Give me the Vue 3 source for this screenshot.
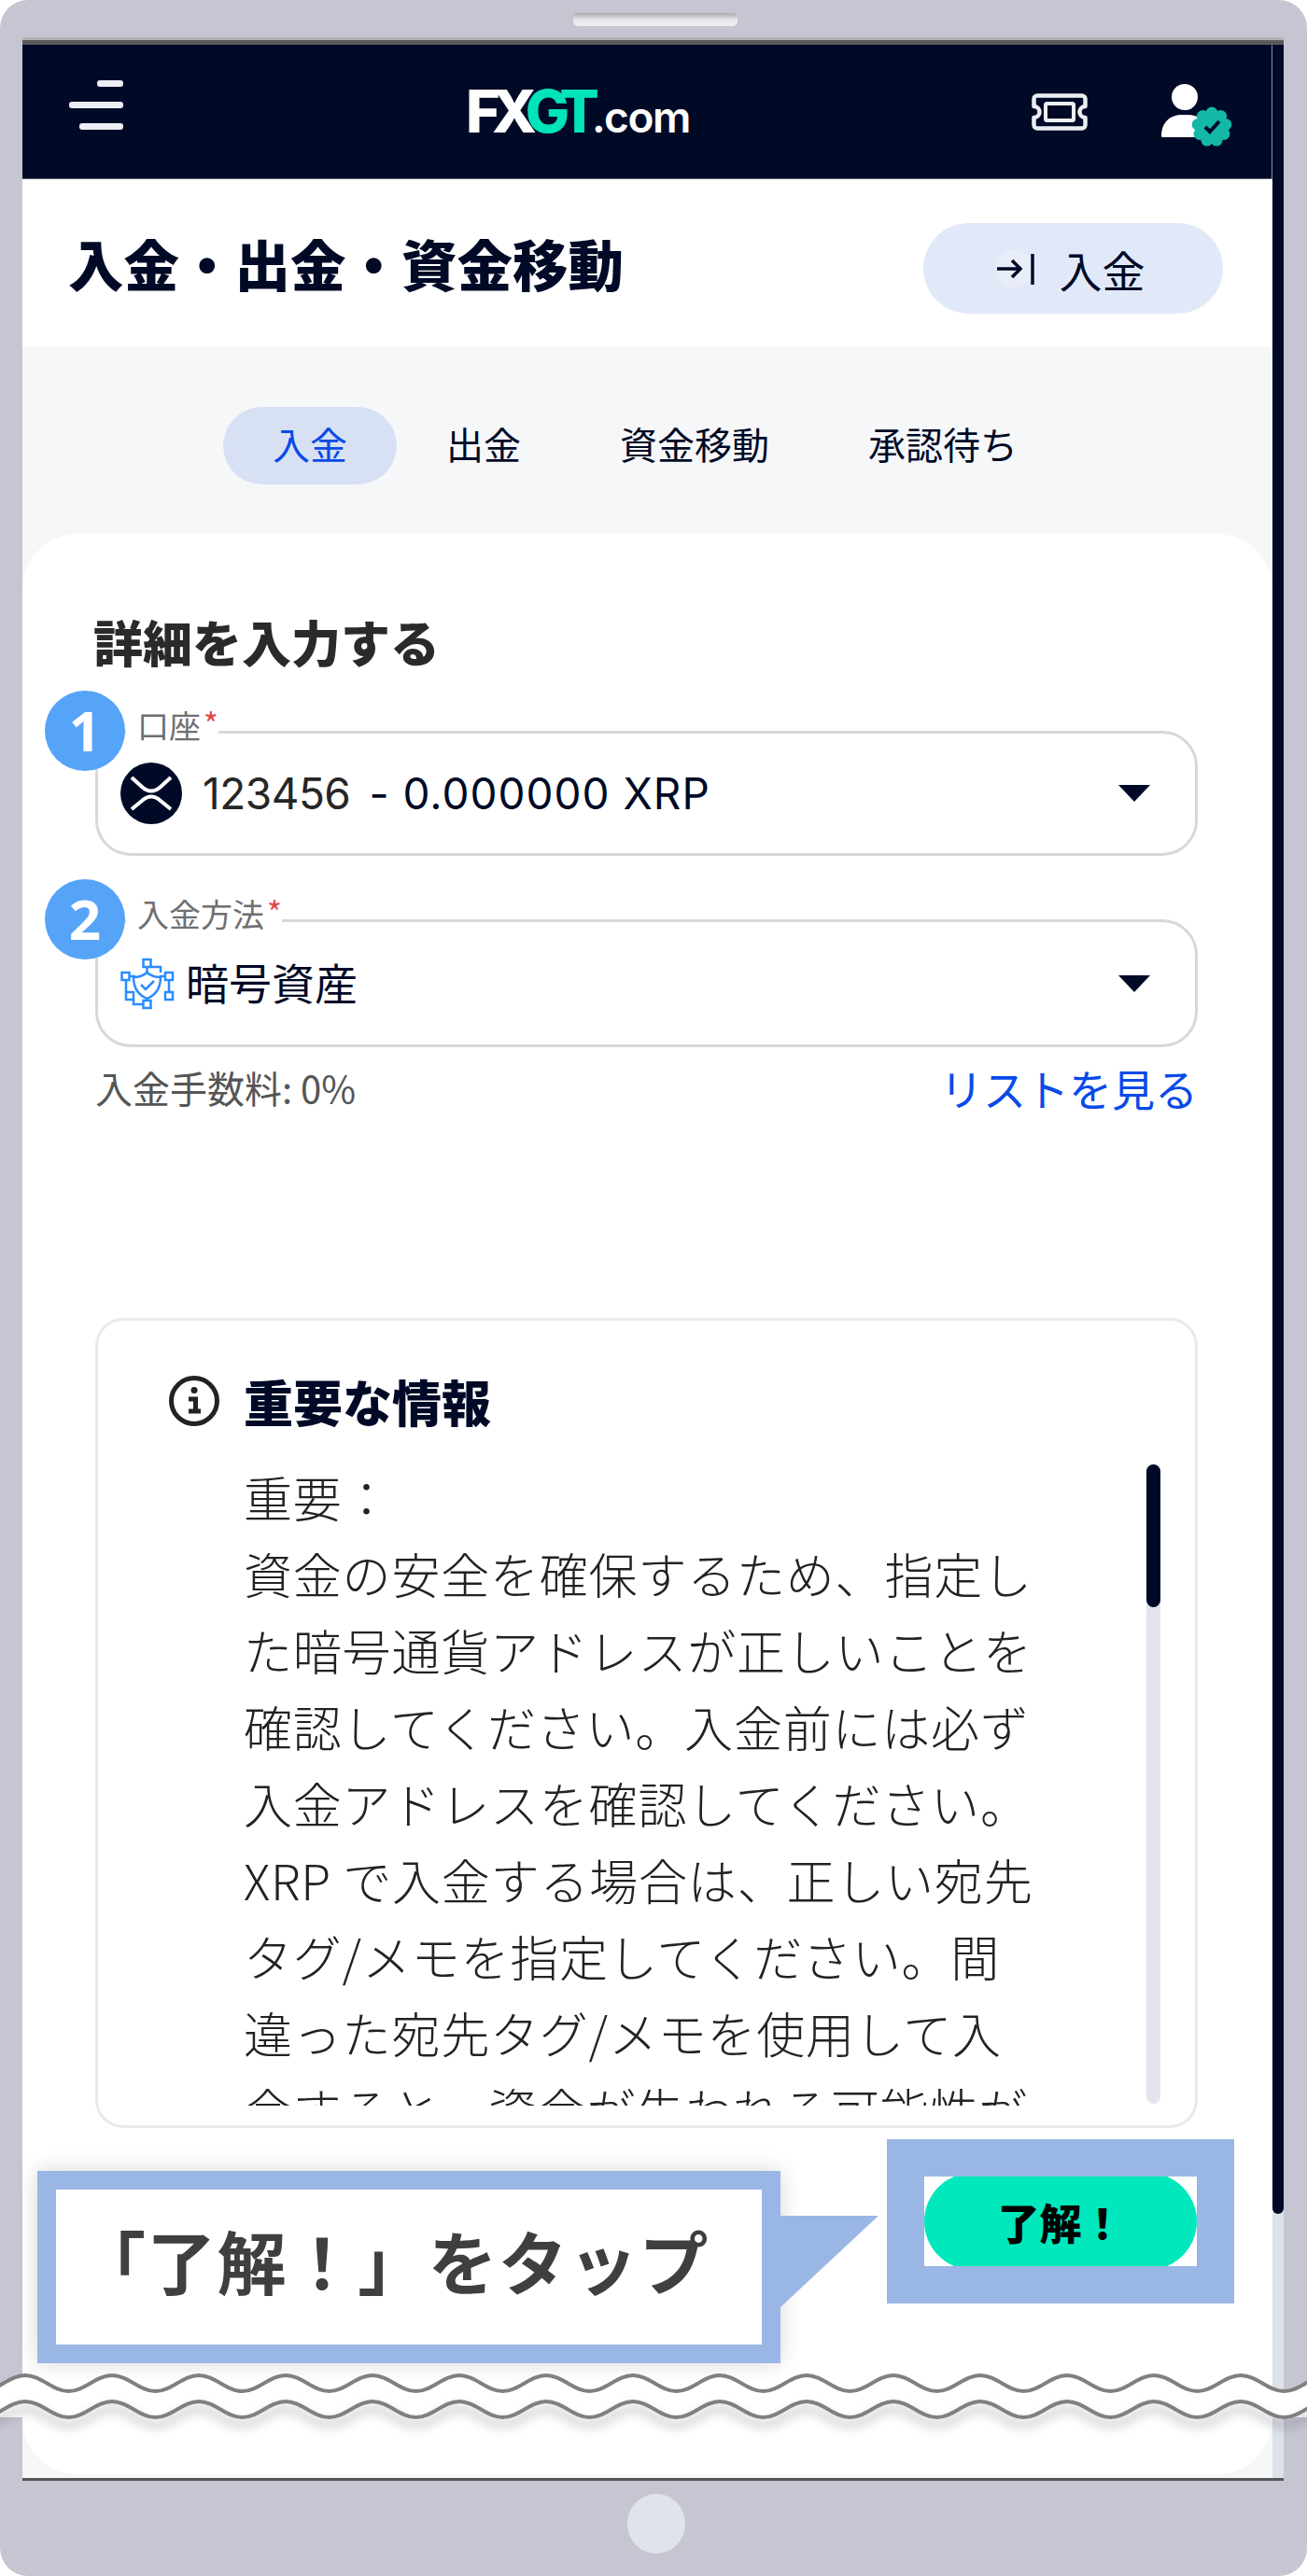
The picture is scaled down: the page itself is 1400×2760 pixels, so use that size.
<script setup>
import { computed } from 'vue'

const tabs = ['入金', '出金', '資金移動', '承認待ち']

const noticeLines = [
  '重要：',
  '資金の安全を確保するため、指定し',
  'た暗号通貨アドレスが正しいことを',
  '確認してください。入金前には必ず',
  '入金アドレスを確認してください。',
  'XRP で入金する場合は、正しい宛先',
  'タグ/メモを指定してください。間',
  '違った宛先タグ/メモを使用して入',
  '金すると、資金が失われる可能性が',
]

// バッジのギザギザ
const scallops = Array.from({ length: 9 }, (_, i) => {
  const a = (i / 9) * Math.PI * 2
  return { cx: 55 + Math.sin(a) * 15, cy: 47 - Math.cos(a) * 15 }
})

// ページ省略の波線
function wave(y0, y1) {
  let d = `M-66 ${y0}`
  for (let x = -66; x < 1400; x += 93) {
    d += ` C${x + 17} ${y0} ${x + 29.5} ${y1} ${x + 46.5} ${y1} C${x + 63.5} ${y1} ${x + 76} ${y0} ${x + 93} ${y0}`
  }
  return d
}

const waveTop = computed(() => wave(15, 32))
const waveBottom = computed(() => wave(43, 60))
const waveFill = computed(() => `${waveTop.value} L1400 60 L-66 60 Z`)
</script>

<template>
  <div class="phone">
    <div class="speaker"></div>

    <div class="screen">
      <div class="main">
        <header class="nav">
          <div class="menu"><i></i><i></i><i></i></div>
          <div class="logo"><span class="fx">FX</span><span class="gt">GT</span><span class="com">.com</span></div>
          <svg class="ticket" viewBox="0 0 60 40" fill="none" stroke="#eceef5" stroke-width="4.500">
            <path d="M6 2.500H54a3.500 3.500 0 0 1 3.500 3.500V14a6 6 0 0 0 0 12V34a3.500 3.500 0 0 1-3.500 3.500H6a3.500 3.500 0 0 1-3.500-3.500V26a6 6 0 0 0 0-12V6a3.500 3.500 0 0 1 3.500-3.500Z" stroke-linejoin="round" />
            <rect x="15" y="11" width="30" height="18" rx="1.500" stroke-width="4" />
          </svg>
          <svg class="user" viewBox="0 0 78 68">
            <circle cx="26" cy="15" r="14" fill="#fff" />
            <path d="M1 57C1 42 10 34 24 34H30C38 34 44 38 48 44V58H3C1.500 58 1 57.500 1 57Z" fill="#fff" />
            <g fill="#14b8a6">
              <circle cx="55" cy="47" r="17" />
              <circle v-for="(s, i) in scallops" :key="i" :cx="s.cx" :cy="s.cy" r="6.500" />
            </g>
            <path d="M48 47L53 52L63 41" fill="none" stroke="#000a26" stroke-width="4" />
          </svg>
        </header>

        <section class="title-bar">
          <h1>入金・出金・資金移動</h1>
          <button class="deposit-btn">
            <svg viewBox="0 0 44 48" width="44" height="48" fill="none" stroke="#000a26" stroke-width="3.500">
              <circle cx="20" cy="24" r="20" fill="#e9edf8" stroke="none" />
              <path d="M2 24H27M18 15L27 24L18 33" />
              <path d="M40 8V41" />
            </svg>
            <span>入金</span>
          </button>
        </section>

        <nav class="tabs">
          <a v-for="(t, i) in tabs" :key="t" class="tab" :class="{ active: i === 0 }">{{ t }}</a>
        </nav>

        <section class="card">
          <h2>詳細を入力する</h2>

          <div class="field first">
            <span class="step">1</span>
            <label>口座<em>*</em></label>
            <div class="value">
              <svg class="xrp" viewBox="0 0 66 66">
                <circle cx="33" cy="33" r="33" fill="#000a26" />
                <path d="M12 16L23 26Q33 35 43 26L54 16M12 50L23 41Q33 32 43 41L54 50" fill="none" stroke="#fff" stroke-width="4" />
              </svg>
              <span class="acc">123456</span>
              <span class="bal">- 0.000000 XRP</span>
            </div>
            <span class="caret"></span>
          </div>

          <div class="field second">
            <span class="step">2</span>
            <label>入金方法<em>*</em></label>
            <div class="value">
              <svg class="crypto" viewBox="0 0 58 56" fill="none" stroke="#2b8cff" stroke-width="2.500">
                <rect x="24.500" y="2" width="8" height="8" /><rect x="1.500" y="16" width="8" height="8" />
                <rect x="48" y="16" width="8" height="8" /><rect x="6" y="37" width="8" height="8" />
                <rect x="48" y="37" width="8" height="8" /><rect x="24.500" y="46" width="8" height="8" />
                <path d="M28.500 10V16M10 20H16M48 20H42M52 24V37M6 24V37M14 45V50H24M43 16V10H33" />
                <path d="M28.500 16C33 20 38 21 43 21C43 33 38 40 28.500 44C19 40 14 33 14 21C19 21 24 20 28.500 16Z" />
                <path d="M22 29L27 34L36 25" />
              </svg>
              <span class="method">暗号資産</span>
            </div>
            <span class="caret"></span>
          </div>

          <div class="fee-row">
            <span class="fee">入金手数料: 0%</span>
            <a class="list-link">リストを見る</a>
          </div>

          <div class="notice">
            <div class="notice-head">
              <svg viewBox="0 0 56 56" width="56" height="56" fill="none" stroke="#222" stroke-width="5">
                <circle cx="28" cy="28" r="24.500" />
                <path d="M22 26H29.500V39M22 39H35" stroke-width="5" />
                <circle cx="28" cy="16.500" r="3.500" fill="#222" stroke="none" />
              </svg>
              <h3>重要な情報</h3>
            </div>
            <div class="notice-body">
              <div class="notice-text">
                <p v-for="line in noticeLines" :key="line">{{ line }}</p>
              </div>
              <div class="notice-scroll"><i></i></div>
            </div>
          </div>
        </section>
      </div>

      <div class="scrollbar"><i></i></div>
    </div>

    <!-- 操作説明の吹き出し -->
    <div class="callout">
      <span class="tail"></span>
      <div class="callout-inner">「了解！」をタップ</div>
    </div>
    <div class="highlight">
      <div class="ok-clip"><button class="ok-btn">了解！</button></div>
    </div>

    <svg class="wave" viewBox="0 0 1400 90" width="1400" height="90" fill="none">
      <path :d="waveFill" fill="#fff" />
      <path :d="waveTop" stroke="#808080" stroke-width="4" />
      <path class="wave-shadow" :d="waveBottom" stroke="#808080" stroke-width="4" />
    </svg>

    <div class="home"></div>
  </div>
</template>

<style>
html, body { background: #fff; }
</style>

<style scoped>
.phone {
  position: relative;
  width: 1400px;
  height: 2760px;
  padding-top: 40px;
  box-sizing: border-box;
  background: #c6c6d3;
  border-radius: 30px;
  overflow: hidden;
  font-family: "Noto Sans CJK JP", "Noto Sans", sans-serif;
  color: #000a26;
}
.speaker {
  position: absolute;
  top: 14px;
  left: 614px;
  width: 176px;
  height: 14px;
  border-radius: 5px;
  background: linear-gradient(#a9a9ad, #e4e6ea 50%, #eef0f2);
}
.screen {
  display: flex;
  margin: 0 25px 0 24px;
  height: 2618px;
  border-top: 3px solid #b0b0b0;
  box-sizing: border-box;
  position: relative;
  border-bottom: 3px solid #555;
}
.screen::before {
  content: "";
  position: absolute;
  top: 0;
  left: 0;
  right: 0;
  height: 5px;
  background: #5a5a5a;
}
.main {
  flex: 1;
  display: flex;
  flex-direction: column;
  min-width: 0;
  background: #f6f7f9;
  padding: 5px 0 4px;
}
.scrollbar {
  width: 12px;
  background: #dde2e8;
  padding-top: 5px;
}
.scrollbar i {
  display: block;
  height: 2324px;
  background: #000a26;
  border-radius: 0 0 6px 6px;
}
.nav {
  height: 144px;
  flex: none;
  display: flex;
  align-items: center;
  padding: 0 41px 0 50px;
  background: #000a26;
  border-right: 1px solid #8a8da0;
  border-bottom: 1px solid #5c6178;
  box-sizing: border-box;
}
.menu {
  display: flex;
  flex-direction: column;
  align-items: flex-end;
  gap: 16px;
  width: 58px;
  margin-top: -15px;
}
.menu i { display: block; height: 7px; background: #eceef5; border-radius: 3px; }
.menu i:nth-child(1) { width: 28px; }
.menu i:nth-child(2) { width: 58px; }
.menu i:nth-child(3) { width: 47px; }
.logo {
  margin-left: 367px;
  font-family: Inter, sans-serif;
  line-height: 1;
  white-space: nowrap;
  display: flex;
  align-items: baseline;
}
.logo .fx, .logo .gt { font-size: 63px; font-weight: 800; letter-spacing: -9px; }
.logo .fx { color: #fff; }
.logo .gt { color: #00e3bb; margin-left: -3px; }
.logo .com { font-size: 46px; font-weight: 600; color: #fff; margin-left: 1px; letter-spacing: -1.500px; }
.ticket { width: 60px; height: 40px; margin-left: auto; }
.user { width: 78px; height: 68px; margin-left: 78px; margin-top: 6px; overflow: visible; }
.title-bar {
  height: 180px;
  flex: none;
  display: flex;
  align-items: center;
  justify-content: space-between;
  padding: 0 53px 0 49px;
  background: #fff;
}
h1 {
  margin: -2px 0 0;
  font-size: 59.500px;
  font-weight: 900;
  line-height: 70px;
}
.deposit-btn {
  display: flex;
  align-items: center;
  justify-content: center;
  gap: 25px;
  width: 321px;
  height: 97px;
  padding: 0 7px 0 0;
  border: 0;
  border-radius: 49px;
  background: #e1e9f9;
  color: #000a26;
  font: 400 46px "Noto Sans CJK JP", sans-serif;
  margin-top: 11px;
}
.tabs {
  flex: none;
  display: flex;
  justify-content: center;
  padding: 64px 5px 53px 0;
}
.tab {
  height: 83px;
  line-height: 78px;
  padding: 0 53px;
  border-radius: 42px;
  font-size: 40px;
  color: #000a26;
}
.tab.active { background: #d8e1f3; color: #0a4ae8; }
.card {
  flex: 1;
  background: #fff;
  border-radius: 60px;
  padding: 85px 80px 0 78px;
  min-height: 0;
}
h2 {
  margin: 0 0 66px -2px;
  font-size: 53px;
  line-height: 60px;
  font-weight: 900;
  color: #2a2a2a;
}
.field {
  position: relative;
  display: flex;
  align-items: center;
  justify-content: space-between;
  box-sizing: border-box;
  border: 3px solid #d8d8d8;
  border-radius: 38px;
  padding: 0 48px 0 24px;
}
.field.first { height: 134px; margin-bottom: 68px; }
.field.second { height: 137px; }
.step {
  position: absolute;
  left: -57px;
  top: -46px;
  width: 86px;
  height: 86px;
  border-radius: 50%;
  background: #56a4f8;
  color: #fff;
  font: 700 60px/84px "Noto Sans", sans-serif;
  text-align: center;
}
label {
  position: absolute;
  left: 30px;
  top: -33px;
  padding: 0 0 0 12px;
  height: 52px;
  line-height: 44px;
  font-size: 34px;
  color: #6f6f72;
  background: #fff;
}
label em { color: #e04a4a; font-style: normal; font-size: 34px; margin-left: 3px; vertical-align: 2px; }
.value { display: flex; align-items: center; }
.xrp { width: 66px; height: 66px; margin-right: 22px; }
.acc, .bal { font: 400 46px Inter, sans-serif; white-space: pre; }
.acc { color: #262626; margin-right: 20px; letter-spacing: -0.500px; }
.bal { color: #000a26; letter-spacing: 1px; }
.crypto { width: 58px; height: 56px; margin-right: 12px; }
.method { font-size: 46px; margin-top: -5px; }
.caret {
  width: 0;
  height: 0;
  border-left: 17px solid transparent;
  border-right: 17px solid transparent;
  border-top: 18px solid #000a26;
}
.fee-row {
  display: flex;
  justify-content: space-between;
  align-items: center;
  height: 50px;
  margin-top: 18px;
}
.fee { font-size: 40px; color: #555; }
.list-link { font-size: 46px; color: #0a4ae8; }
.notice {
  margin-top: 222px;
  height: 868px;
  box-sizing: border-box;
  border: 3px solid #e8eaec;
  border-radius: 30px;
  padding: 0 37px 0 75px;
}
.notice-head {
  display: flex;
  align-items: center;
  gap: 25px;
  height: 88px;
  margin-top: 42px;
}
.notice-head h3 { margin: 0; font-size: 53px; font-weight: 900; line-height: 60px; }
.notice-body {
  display: flex;
  justify-content: space-between;
  height: 693px;
  margin-top: 18px;
  padding-left: 81px;
}
.notice-text { overflow: hidden; }
.notice-text p {
  margin: 0;
  height: 82px;
  line-height: 82px;
  font-family: "Liberation Sans Narrow", "Noto Sans CJK JP", sans-serif;
  font-size: 52px;
  font-weight: 300;
  letter-spacing: 0.800px;
  white-space: nowrap;
  color: #222;
}
.notice-scroll {
  width: 15px;
  height: 685px;
  margin-top: 6px;
  border-radius: 8px;
  background: #e2e6ec;
}
.notice-scroll i {
  display: block;
  height: 153px;
  border-radius: 8px;
  background: #000a26;
}
.callout {
  position: absolute;
  left: 40px;
  top: 2326px;
  width: 796px;
  height: 206px;
  box-sizing: border-box;
  border: 20px solid #9ab6e4;
  background: #fff;
  box-shadow: 0 0 22px rgba(0, 0, 0, 0.16);
}
.callout-inner {
  height: 100%;
  box-sizing: border-box;
  display: flex;
  align-items: center;
  padding: 0 0 18px 22px;
  font-size: 74px;
  letter-spacing: 1.300px;
  font-weight: 700;
  color: #3f3f3f;
  white-space: nowrap;
}
.tail {
  position: absolute;
  left: 776px;
  top: 28px;
  width: 105px;
  height: 98px;
  background: #9ab6e4;
  clip-path: polygon(0 0, 100% 0, 0 100%);
}
.highlight {
  position: absolute;
  left: 950px;
  top: 2292px;
  width: 372px;
  height: 176px;
  box-sizing: border-box;
  padding: 40px;
  background: #9ab6e4;
}
.ok-clip {
  height: 96px;
  overflow: hidden;
  background: #fff;
}
.ok-btn {
  display: block;
  width: 100%;
  height: 104px;
  margin-top: -4px;
  border: 0;
  border-radius: 52px;
  background: #00e8bc;
  color: #000;
  font: 900 45px "Noto Sans CJK JP", sans-serif;
}
.wave {
  position: absolute;
  left: 0;
  top: 2530px;
  overflow: visible;
}
.wave-shadow { filter: drop-shadow(0 8px 6px rgba(0, 0, 0, 0.35)); }
.home {
  position: absolute;
  left: 672px;
  top: 2672px;
  width: 62px;
  height: 64px;
  border-radius: 50%;
  background: #e0e4ea;
}
</style>
